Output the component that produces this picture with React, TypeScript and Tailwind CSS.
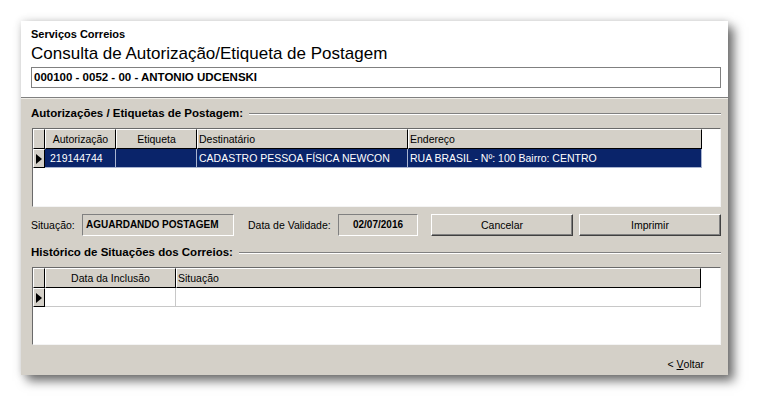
import React from "react";

const font = "font-['Liberation_Sans',Arial,sans-serif]";

function Arrow() {
  return (
    <svg width="6" height="10" viewBox="0 0 6 10" className="block">
      <path d="M0 0 L6 5 L0 10 Z" fill="#000" />
    </svg>
  );
}

function GroupTitle({ label }: { label: string }) {
  return (
    <div className="flex items-center h-[12px]">
      <span className="text-[11.5px] font-bold text-black whitespace-nowrap leading-none">
        {label}
      </span>
      <div className="flex-1 ml-[6px] border-t border-t-[#808080] border-b border-b-white" />
    </div>
  );
}

interface Col {
  label: string;
  width: string;
  align: "center" | "left";
}

const grid1Cols: Col[] = [
  { label: "Autorização", width: "w-[71px]", align: "center" },
  { label: "Etiqueta", width: "w-[81px]", align: "center" },
  { label: "Destinatário", width: "w-[211px]", align: "left" },
  { label: "Endereço", width: "w-[294px]", align: "left" },
];

const grid1Row = [
  "219144744",
  "",
  "CADASTRO PESSOA FÍSICA NEWCON",
  "RUA BRASIL - Nº: 100 Bairro: CENTRO",
];

const grid2Cols: Col[] = [
  { label: "Data da Inclusão", width: "w-[131px]", align: "center" },
  { label: "Situação", width: "w-[525px]", align: "left" },
];

function HeaderRow({ cols }: { cols: Col[] }) {
  return (
    <div className="flex h-[20px]">
      <div className="w-[12px] shrink-0 bg-[#D4D0C8] border-l border-t border-white border-r border-r-black border-b border-b-black" />
      {cols.map((c) => (
        <div
          key={c.label}
          className={`${c.width} shrink-0 bg-[#D4D0C8] border-l border-t border-white border-r border-r-black border-b border-b-black flex items-center text-[10.5px] text-black leading-none ${
            c.align === "center" ? "justify-center" : "pl-[1px]"
          }`}
        >
          {c.label}
        </div>
      ))}
    </div>
  );
}

function Grid1() {
  return (
    <div className="h-[79px] ml-[1px] mr-[7px] bg-white border-l border-t border-[#6a6a6a] border-r border-b border-r-[#f4f4f4] border-b-[#f4f4f4]">
      <HeaderRow cols={grid1Cols} />
      <div className="flex h-[19px]">
        <div className="w-[12px] shrink-0 bg-[#D4D0C8] border-l border-t border-white border-r border-r-black border-b border-b-black flex items-center justify-center">
          <Arrow />
        </div>
        {grid1Cols.map((c, i) => (
          <div
            key={c.label}
            className={`${c.width} shrink-0 bg-[#0A246A] border-r border-b border-[#A9B4D0] flex items-center text-[10.5px] text-white leading-none whitespace-nowrap overflow-hidden ${
              i === 0 ? "pl-[5px]" : "pl-[2px]"
            }`}
          >
            {grid1Row[i]}
          </div>
        ))}
      </div>
    </div>
  );
}

function Grid2() {
  return (
    <div className="h-[78px] ml-[1px] mr-[7px] bg-white border-l border-t border-[#6a6a6a] border-r border-b border-r-[#f4f4f4] border-b-[#f4f4f4]">
      <HeaderRow cols={grid2Cols} />
      <div className="flex h-[19px]">
        <div className="w-[12px] shrink-0 bg-[#D4D0C8] border-l border-t border-white border-r border-r-black border-b border-b-black flex items-center justify-center">
          <Arrow />
        </div>
        {grid2Cols.map((c) => (
          <div
            key={c.label}
            className={`${c.width} shrink-0 bg-white border-r border-b border-[#C8C8C8]`}
          />
        ))}
      </div>
    </div>
  );
}

function ReadBox({
  text,
  width,
  center,
}: {
  text: string;
  width: string;
  center?: boolean;
}) {
  return (
    <div
      className={`${width} shrink-0 h-[22px] bg-[#D4D0C8] border-l border-t border-[#808080] border-r border-b border-r-white border-b-white flex items-center text-[10px] font-bold text-black leading-none ${
        center ? "justify-center" : "pl-[3px]"
      }`}
    >
      {text}
    </div>
  );
}

function Button({ label }: { label: string }) {
  return (
    <div className="w-[142px] shrink-0 h-[22px] bg-[#D4D0C8] border-l border-t border-white border-r border-b border-r-[#404040] border-b-[#404040] flex items-center justify-center text-[10.5px] text-black leading-none shadow-[inset_-1px_-1px_0_#808080]">
      {label}
    </div>
  );
}

export default function App() {
  return (
    <div className={`w-[770px] h-[417px] bg-white pt-[21px] pl-[21px] ${font}`}>
      <div className="w-[707px] h-[354px] flex flex-col shadow-[6px_6px_10px_rgba(0,0,0,0.55),0_0_8px_rgba(0,0,0,0.15)]">
        {/* Header */}
        <div className="h-[76px] bg-white pl-[10px] pr-[7px] pt-[7px] flex flex-col">
          <div className="text-[11px] font-bold text-black leading-[12px]">
            Serviços Correios
          </div>
          <div className="text-[17px] text-black leading-[20px] mt-[4px]">
            Consulta de Autorização/Etiqueta de Postagem
          </div>
          <div className="mt-[3px] h-[21px] border border-[#808080] bg-white flex items-center pl-[2px] text-[11.5px] font-bold text-black leading-none">
            000100 - 0052 - 00 - ANTONIO UDCENSKI
          </div>
        </div>
        <div className="border-t border-t-[#808080] border-b border-b-[#f0eee8]" />

        {/* Body */}
        <div className="flex-1 bg-[#D4D0C8] pl-[10px] flex flex-col">
          <div className="mt-[9px] mr-[7px]">
            <GroupTitle label="Autorizações / Etiquetas de Postagem:" />
          </div>
          <div className="mt-[8px]">
            <Grid1 />
          </div>

          <div className="mt-[7px] flex items-center h-[22px] text-[10.5px] text-black">
            <div className="w-[51px] shrink-0 leading-none">Situação:</div>
            <ReadBox text="AGUARDANDO POSTAGEM" width="w-[152px]" />
            <div className="ml-[14px] w-[90px] shrink-0 leading-none">Data de Validade:</div>
            <ReadBox text="02/07/2016" width="w-[80px]" center />
            <div className="ml-[13px]">
              <Button label="Cancelar" />
            </div>
            <div className="ml-[6px]">
              <Button label="Imprimir" />
            </div>
          </div>

          <div className="mt-[11px] mr-[7px]">
            <GroupTitle label="Histórico de Situações dos Correios:" />
          </div>
          <div className="mt-[8px]">
            <Grid2 />
          </div>

          <div className="mt-[12px] h-[14px] flex justify-end pr-[24px] text-[10.5px] text-black leading-none items-center">
            &lt; <span className="underline ml-[3px]">V</span>oltar
          </div>
        </div>
      </div>
    </div>
  );
}
